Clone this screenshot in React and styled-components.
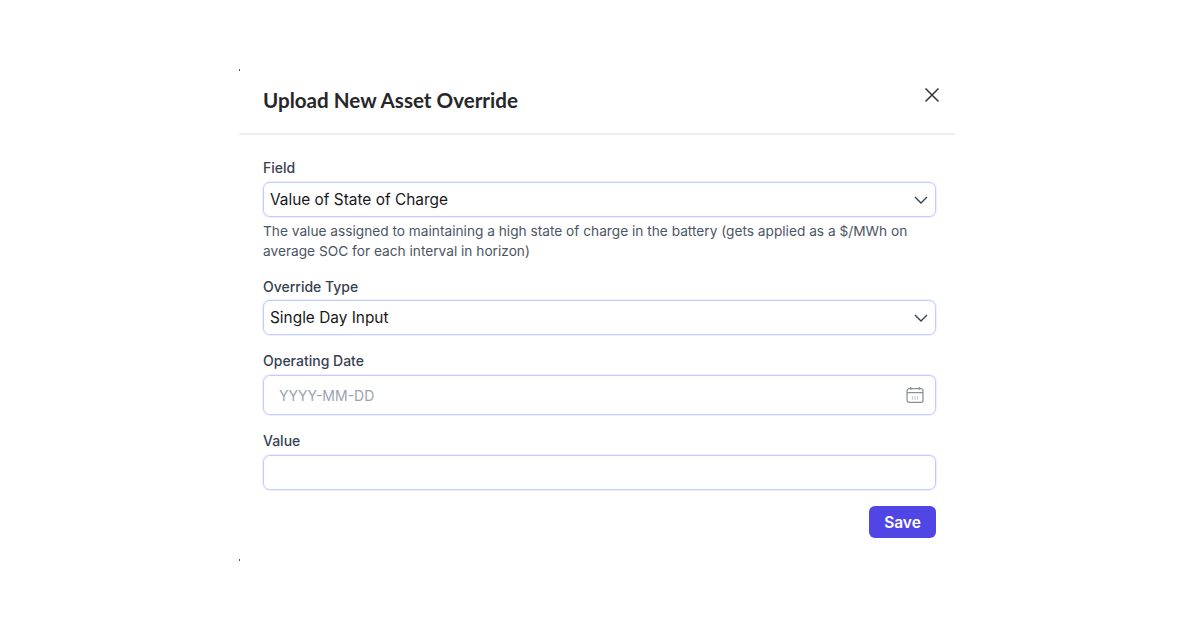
import styled, { createGlobalStyle } from 'styled-components'

const GlobalStyle = createGlobalStyle`
    html, body {
        margin: 0;
        padding: 0;
        background: #fff;
    }

    * {
        box-sizing: border-box;
    }
`

const Page = styled.div`
    width: 1200px;
    height: 630px;
    padding-top: 69px;
    display: flex;
    justify-content: center;
    font-family: Inter, "Liberation Sans", sans-serif;
    overflow: hidden;
`

const Modal = styled.div`
    position: relative;
    width: 716px;
    height: 492px;
    margin-left: -6px;
`

const Speck = styled.span`
    position: absolute;
    left: 0;
    ${p => (p.$bottom ? 'bottom: 0;' : 'top: 0;')}
    width: 1px;
    height: 2px;
    background: #555;
`

const Header = styled.div`
    height: 66px;
    padding: 17px 15px 0 24px;
    display: flex;
    justify-content: space-between;
    align-items: flex-start;
    border-bottom: 2px solid #eeeeee;
`

const Title = styled.h2`
    margin: 0;
    font-family: Lato, sans-serif;
    font-size: 20.6px;
    line-height: 28px;
    font-weight: 700;
    color: #27272a;
`

const CloseButton = styled.button`
    width: 16px;
    height: 16px;
    margin-top: 1px;
    padding: 0;
    border: none;
    background: none;
    display: flex;
    color: #333;
`

const Body = styled.form`
    padding: 26px 19px 0 24px;
    display: flex;
    flex-direction: column;
`

const Label = styled.label`
    display: block;
    height: 14px;
    margin-bottom: ${p => p.$gap || 7}px;
    font-size: 14px;
    line-height: 14px;
    font-weight: 500;
    color: #374151;
`

const Group = styled.div`
    margin-bottom: ${p => p.$gap || 0}px;
`

const Control = styled.div`
    height: ${p => p.$height || 35}px;
    padding: ${p => p.$inset || '0 7px 0 6px'};
    display: flex;
    justify-content: space-between;
    align-items: center;
    border: 1px solid #c3cdfd;
    box-shadow: 0 0 0 1px rgba(199, 210, 254, 0.35);
    border-radius: 7px;
    background: #fff;
    font-size: 15.4px;
    color: #18181b;
`

const Placeholder = styled.span`
    font-size: 14px;
    color: #9ca3af;
`

const Help = styled.p`
    margin: 4px 0 0;
    font-size: 13.7px;
    line-height: 20px;
    color: #4b5563;
`

const Footer = styled.div`
    margin-top: 16px;
    display: flex;
    justify-content: flex-end;
`

const SaveButton = styled.button`
    width: 67px;
    height: 32px;
    border: none;
    border-radius: 6px;
    background: #4f46e5;
    color: #fff;
    font-family: inherit;
    font-size: 15.5px;
    font-weight: 600;
`

function Chevron() {
    return (
        <svg width="14" height="8" viewBox="0 0 14 8" fill="none" stroke="#374151" strokeWidth="1.4">
            <path d="M1 1l6 6 6-6" />
        </svg>
    )
}

function CalendarIcon() {
    return (
        <svg width="18" height="18" viewBox="0 0 17 17" fill="none" stroke="#8b929c" strokeWidth="1.2">
            <rect x="1" y="2.5" width="15" height="13" rx="2" />
            <path d="M1 6.2h15M4.5 1v2.5M12.5 1v2.5" />
            <path d="M6 9.5v3.5M8.5 9.5v3.5M11 9.5v3.5" stroke="#c4c8ce" strokeWidth="1" />
        </svg>
    )
}

export default function App() {
    return (
        <Page>
            <GlobalStyle />
            <Modal>
                <Speck />
                <Speck $bottom />
                <Header>
                    <Title>Upload New Asset Override</Title>
                    <CloseButton type="button" aria-label="Close">
                        <svg width="16" height="16" viewBox="0 0 16 16" fill="none" stroke="currentColor" strokeWidth="1.5">
                            <path d="M1.5 1.5l13 13M14.5 1.5l-13 13" />
                        </svg>
                    </CloseButton>
                </Header>
                <Body>
                    <Group $gap={19}>
                        <Label>Field</Label>
                        <Control>
                            Value of State of Charge
                            <Chevron />
                        </Control>
                        <Help>
                            The value assigned to maintaining a high state of charge in the battery (gets applied as a $/MWh on
                            average SOC for each interval in horizon)
                        </Help>
                    </Group>
                    <Group $gap={19}>
                        <Label $gap={6}>Override Type</Label>
                        <Control>
                            Single Day Input
                            <Chevron />
                        </Control>
                    </Group>
                    <Group $gap={19}>
                        <Label>Operating Date</Label>
                        <Control $height={40} $inset="0 11px 0 15px">
                            <Placeholder>YYYY-MM-DD</Placeholder>
                            <CalendarIcon />
                        </Control>
                    </Group>
                    <Group>
                        <Label>Value</Label>
                        <Control />
                    </Group>
                    <Footer>
                        <SaveButton type="button">Save</SaveButton>
                    </Footer>
                </Body>
            </Modal>
        </Page>
    )
}
